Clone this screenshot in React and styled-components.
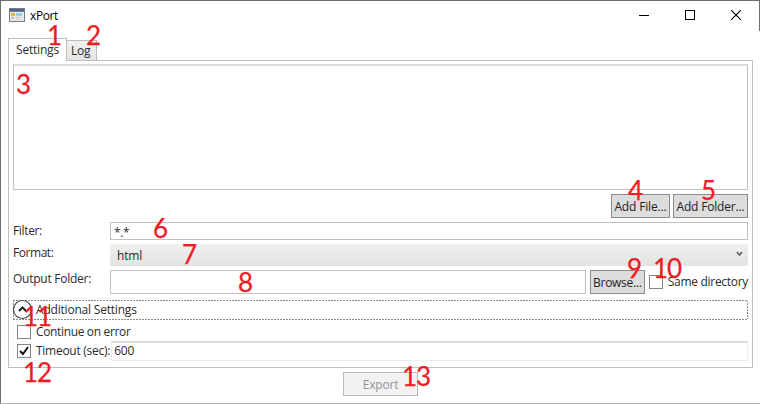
import React from "react";
import styled, { createGlobalStyle } from "styled-components";

const GlobalStyle = createGlobalStyle`
  * { box-sizing: border-box; }
  body { margin: 0; background: #fff; overflow: hidden; }
`;

const Window = styled.div`
  position: relative;
  width: 760px;
  height: 404px;
  display: flex;
  flex-direction: column;
  background: #fff;
  border-left: 1px solid #6d6d6d;
  border-bottom: 1px solid #b4b4b4;
  font-family: "Open Sans", "Noto Sans", sans-serif;
  font-size: 12px;
  line-height: 16px;
  color: #2b2b2b;
`;

const TitleBar = styled.header`
  height: 31px;
  flex: none;
  display: flex;
  align-items: flex-start;
  border-top: 1px solid #6d6d6d;
  border-right: 1px solid #6d6d6d;
  padding-left: 8px;
  color: #000;
`;

const Title = styled.div`
  flex: 1;
  padding-left: 5px;
  padding-top: 7px;
`;

const CaptionButton = styled.div`
  width: 46px;
  height: 28px;
  display: flex;
  align-items: center;
  justify-content: center;
`;

const Captions = styled.div`
  display: flex;
`;

const Text = styled.span`
  display: inline-block;
  white-space: nowrap;
  letter-spacing: ${(p) => p.$track || 0}px;
  padding-top: ${(p) => p.$top || 0}px;
`;

const TabStrip = styled.nav`
  height: 23px;
  margin: 7px 0 -1px 7px;
  flex: none;
  display: flex;
  align-items: flex-end;
  z-index: 1;
`;

const Tab = styled.div`
  width: ${(p) => p.$width}px;
  height: ${(p) => (p.$active ? 23 : 20)}px;
  margin-bottom: ${(p) => (p.$active ? 0 : 1)}px;
  padding-top: ${(p) => (p.$active ? 3 : 2)}px;
  padding-left: ${(p) => (p.$active ? 7 : 4)}px;
  border: 1px solid #bcbcbc;
  border-bottom: 0;
  border-left-width: ${(p) => (p.$active ? 1 : 0)}px;
  background: ${(p) => (p.$active ? "#fff" : "linear-gradient(#f0f0f0, #e5e5e5)")};
`;

const Panel = styled.main`
  width: 745px;
  height: 308px;
  flex: none;
  margin-left: 7px;
  border: 1px solid #bfbfbf;
  padding: 3px 4px 0;
  display: flex;
  flex-direction: column;
`;

const FileList = styled.div`
  height: 126px;
  flex: none;
  border: 1px solid #c0c0c2;
  border-top: 2px solid #dcdcdc;
`;

const Actions = styled.div`
  height: 32px;
  flex: none;
  display: flex;
  justify-content: flex-end;
  gap: 3px;
  padding-top: 4px;
`;

const Button = styled.button`
  width: ${(p) => p.$width}px;
  height: 24px;
  padding: 2px 0 0;
  flex: none;
  display: flex;
  align-items: center;
  justify-content: center;
  font: inherit;
  color: #222;
  background: #dddddd;
  border: 1px solid #8b8b8b;
  white-space: nowrap;

  &:disabled {
    color: #929292;
    background: #f2f2f2;
    border-color: #b7babc;
  }
`;

const BrowseButton = styled(Button)`
  margin-left: 4px;
`;

const Row = styled.div`
  height: ${(p) => p.$height}px;
  flex: none;
  display: flex;
  align-items: flex-start;
`;

const Label = styled.div`
  width: 97px;
  flex: none;
`;

const Field = styled.div`
  flex: 1;
  height: ${(p) => p.$height}px;
  display: flex;
  align-items: center;
  padding-left: 3px;
  border: 1px solid #c0c0c4;
`;

const Combo = styled.div`
  flex: 1;
  height: 22px;
  display: flex;
  align-items: center;
  justify-content: space-between;
  padding: 2px 5px 0 7px;
  background: linear-gradient(#f0f0f0, #e3e3e3);
`;

const ComboArrow = styled.svg`
  width: 7px;
  height: 6px;
  margin-bottom: 4px;
`;

const Check = styled.div`
  width: 14px;
  height: 14px;
  flex: none;
  display: flex;
  align-items: center;
  justify-content: center;
  border: 1px solid #858585;
  background: #fff;
  margin: ${(p) => p.$top}px 5px 0 4px;
`;

const Expander = styled.div`
  width: 735px;
  height: 20px;
  margin-top: -1px;
  flex: none;
  display: flex;
  align-items: center;
  background:
    repeating-linear-gradient(90deg, #8a8a8a 0 2px, #fff 2px 3px) top / 100% 1px no-repeat,
    repeating-linear-gradient(90deg, #8a8a8a 0 2px, #fff 2px 3px) bottom / 100% 1px no-repeat,
    repeating-linear-gradient(#8a8a8a 0 2px, #fff 2px 3px) left / 1px 100% no-repeat,
    repeating-linear-gradient(#8a8a8a 0 2px, #fff 2px 3px) right / 1px 100% no-repeat;
`;

const ExpanderIcon = styled.svg`
  width: 20px;
  height: 20px;
  flex: none;
  margin-right: 3px;
  overflow: visible;
`;

const TimeoutField = styled.div`
  flex: 1;
  height: 20px;
  margin-left: 1px;
  padding-left: 2px;
  border: 1px solid #e8eef4;
  border-top: 2px solid #dadada;
`;

const Footer = styled.footer`
  display: flex;
  padding: 4px 0 0 342px;
`;

const Marker = styled.span`
  position: absolute;
  left: ${(p) => p.$x}px;
  top: ${(p) => p.$y}px;
  font: 26px/26px Lato, sans-serif;
  letter-spacing: -1px;
  -webkit-text-stroke: 0.25px #ed1c24;
  color: #ed1c24;
  pointer-events: none;
  z-index: 3;
`;

const markers = [
  [46, 22], [85, 22], [15, 71], [627, 177], [700, 177], [152, 215], [181, 241],
  [237, 269], [626, 255], [652, 255], [22, 303], [22, 359], [401, 363],
];

const AppIcon = styled.svg`
  width: 16px;
  height: 14px;
  margin-top: 7px;
`;

export default function App() {
  return (
    <>
      <GlobalStyle />
      <Window>
        <TitleBar>
          <AppIcon viewBox="0 0 16 14" shapeRendering="crispEdges">
            <rect width="16" height="14" fill="#747b8c" />
            <rect x="1" y="4" width="14" height="9" fill="#e9e9e6" />
            <rect x="1" y="1" width="14" height="2" fill="#536486" />
            <rect x="2" y="5" width="4" height="3" fill="#e5b442" />
            <rect x="7" y="5" width="6" height="3" fill="#8fd0e5" />
            <rect x="2" y="9" width="3" height="2" fill="#c4c4c4" />
            <rect x="7" y="9" width="5" height="1" fill="#c8c8c8" />
            <rect x="7" y="11" width="4" height="1" fill="#d4d4d4" />
          </AppIcon>
          <Title><Text $track={-0.4}>xPort</Text></Title>
          <Captions>
            <CaptionButton>
              <svg width="10" height="10"><path d="M0 5.5h10" stroke="#000" /></svg>
            </CaptionButton>
            <CaptionButton>
              <svg width="10" height="10"><rect x=".5" y=".5" width="9" height="9" fill="none" stroke="#000" /></svg>
            </CaptionButton>
            <CaptionButton>
              <svg width="10" height="10"><path d="M0 0l10 10M10 0L0 10" stroke="#000" strokeWidth="1.1" /></svg>
            </CaptionButton>
          </Captions>
        </TitleBar>

        <TabStrip>
          <Tab $active $width={59}><Text $track={-0.2}>Settings</Text></Tab>
          <Tab $width={30}><Text $track={-0.3}>Log</Text></Tab>
        </TabStrip>

        <Panel>
          <FileList />
          <Actions>
            <Button $width={59}><Text $track={-0.15}>Add File...</Text></Button>
            <Button $width={75}><Text $track={-0.18}>Add Folder...</Text></Button>
          </Actions>

          <Row $height={22}>
            <Label><Text $track={-0.35} $top={1}>Filter:</Text></Label>
            <Field $height={18}><Text $track={-0.4} $top={3}>*.*</Text></Field>
          </Row>
          <Row $height={26}>
            <Label><Text $track={-0.45} $top={1}>Format:</Text></Label>
            <Combo>
              <Text $track={-0.2}>html</Text>
              <ComboArrow viewBox="0 0 7 6">
                <path d="M1 1l2.500 3L6 1" fill="none" stroke="#606060" strokeWidth="1.7" />
              </ComboArrow>
            </Combo>
          </Row>
          <Row $height={31}>
            <Label><Text $track={-0.25} $top={1}>Output Folder:</Text></Label>
            <Field $height={24} />
            <BrowseButton $width={55}><Text $track={-0.3}>Browse...</Text></BrowseButton>
            <Check $top={5} />
            <Text $track={-0.3} $top={4}>Same directory</Text>
          </Row>

          <Expander>
            <ExpanderIcon viewBox="0 0 20 20">
              <circle cx="9.5" cy="9.5" r="9" fill="#fff" stroke="#444" strokeWidth="1.2" />
              <path d="M6 11L9.500 7.500l3.500 3.500" fill="none" stroke="#222" strokeWidth="2" />
            </ExpanderIcon>
            <Text $track={-0.2}>Additional Settings</Text>
          </Expander>
          <Row $height={21}>
            <Check $top={5} />
            <Text $track={-0.35} $top={4}>Continue on error</Text>
          </Row>
          <Row $height={20}>
            <Check $top={3}>
              <svg width="12" height="12"><path d="M2 6l3 3 5-7" fill="none" stroke="#111" strokeWidth="1.9" /></svg>
            </Check>
            <Text $track={-0.27} $top={2}>Timeout (sec):</Text>
            <TimeoutField><Text $track={-0.2}>600</Text></TimeoutField>
          </Row>
        </Panel>

        <Footer>
          <Button disabled $width={75}><Text $track={-0.2}>Export</Text></Button>
        </Footer>

        {markers.map(([x, y], i) => (
          <Marker key={i} $x={x} $y={y}>{i + 1}</Marker>
        ))}
      </Window>
    </>
  );
}
